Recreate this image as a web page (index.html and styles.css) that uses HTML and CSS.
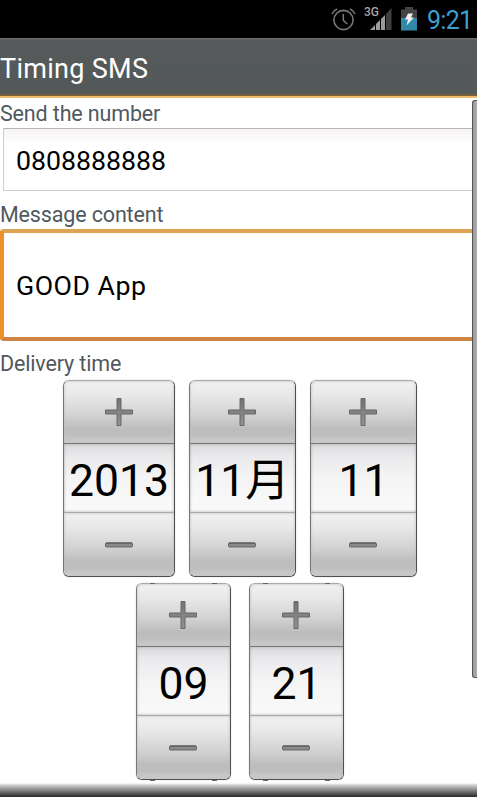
FILE: index.html
```html
<!DOCTYPE html>
<html lang="en">
<head>
  <meta charset="UTF-8" />
  <title>Timing SMS</title>
  <meta name="viewport" content="width=device-width, initial-scale=1" />
  <link rel="stylesheet" href="styles.css">
</head>
<body>
  <svg class="defs" width="0" height="0">
    <defs>
      <linearGradient id="metal" x1="0" y1="0" x2="0" y2="1">
        <stop offset="0" stop-color="#747474" />
        <stop offset="1" stop-color="#929292" />
      </linearGradient>
      <symbol id="plus" viewBox="0 0 28 28">
        <path d="M12 .5h4v11.500h11.500v4H16v11.500h-4V16H.5v-4H12z" fill="url(#metal)" stroke="#666" stroke-linejoin="round" />
      </symbol>
      <symbol id="minus" viewBox="0 0 28 28">
        <rect x=".5" y="12" width="27" height="4" rx="1" fill="#8b8b8b" stroke="#666" />
        <path d="M1 12h26" stroke="#505050" />
      </symbol>
    </defs>
  </svg>

  <div class="status-bar">
    <svg class="alarm" width="26" height="24" viewBox="0 0 26 24" fill="none" stroke="#777">
      <circle cx="12.500" cy="13" r="9.600" stroke-width="1.600" />
      <path d="M12.300 7v6.300l4 3.700" stroke-width="1.500" />
      <path d="M1 7Q2.500 3.500 6 2M19 2Q22.500 3.500 24 7" stroke-width="1.600" />
    </svg>
    <div class="network">
      <span class="network-type">3G</span>
      <svg class="signal" width="22" height="23" viewBox="0 0 22 23">
        <path d="M0 23l5-5v5zM6 17l4-4v10H6zM11 12l4-4v15h-4z" fill="#9b9b9b" />
        <path d="M16 7l5.500-6v22H16z" fill="#3f3f3f" />
      </svg>
    </div>
    <svg class="battery" width="16" height="24" viewBox="0 0 16 24">
      <path d="M4 0h8v2.500h4V12H0V2.500h4z" fill="#444" />
      <path d="M0 11h16v12.500H0z" fill="#3188a8" />
      <path d="M7 6.500h5l-2 4h3L5.500 18.500l1.500-6H4z" fill="#eee" />
    </svg>
    <span class="clock">9:21</span>
  </div>

  <div class="title-bar"><h1>Timing SMS</h1></div>

  <div class="content">
    <label class="label" for="number">Send the number</label>
    <input class="field" id="number" type="text" value="0808888888">

    <label class="label" for="message">Message content</label>
    <input class="field field-active" id="message" type="text" value="GOOD App">

    <div class="label">Delivery time</div>
    <div class="pickers date">
      <div class="picker picker-year">
        <button class="step"><svg><use href="#plus" /></svg></button>
        <div class="value">2013</div>
        <button class="step"><svg><use href="#minus" /></svg></button>
      </div>
      <div class="picker">
        <button class="step"><svg><use href="#plus" /></svg></button>
        <div class="value">11月</div>
        <button class="step"><svg><use href="#minus" /></svg></button>
      </div>
      <div class="picker">
        <button class="step"><svg><use href="#plus" /></svg></button>
        <div class="value">11</div>
        <button class="step"><svg><use href="#minus" /></svg></button>
      </div>
    </div>
    <div class="pickers time">
      <div class="picker picker-time">
        <button class="step"><svg><use href="#plus" /></svg></button>
        <div class="value">09</div>
        <button class="step"><svg><use href="#minus" /></svg></button>
      </div>
      <div class="picker picker-time">
        <button class="step"><svg><use href="#plus" /></svg></button>
        <div class="value">21</div>
        <button class="step"><svg><use href="#minus" /></svg></button>
      </div>
    </div>
    <div class="scrollbar"></div>
  </div>
  <div class="bottom-shade"></div>
</body>
</html>
```
FILE: styles.css
```css
* {
  box-sizing: border-box;
}
body {
  margin: 0;
  height: 797px;
  display: flex;
  flex-direction: column;
  overflow: hidden;
  background: #fff;
  font-family: Roboto, "Noto Sans CJK JP", sans-serif;
  color: #000;
}
.defs {
  position: absolute;
}

/* status bar */
.status-bar {
  height: 38px;
  flex: none;
  display: flex;
  justify-content: flex-end;
  align-items: flex-start;
  padding: 7px 7px 0 0;
  background: #000;
}
.alarm {
  margin-right: 7px;
}
.network {
  width: 28px;
  display: flex;
  justify-content: flex-end;
  position: relative;
  margin-right: 9px;
}
.network-type {
  position: absolute;
  left: 0;
  top: -1px;
  font-size: 12px;
  line-height: 13px;
  font-weight: 500;
  color: #a5a5a5;
}
.battery {
  margin-right: 10px;
}
.clock {
  width: 47px;
  margin-right: -4px;
  font-size: 25px;
  line-height: 27px;
  letter-spacing: -0.7px;
  color: #3f9fce;
}

/* title */
.title-bar {
  height: 60px;
  flex: none;
  background: linear-gradient(#707373 0, #565a5b 2px, #535859 100%);
  border-bottom: 2px solid #edbd69;
  box-shadow: inset 0 -2px #79603b;
}
h1 {
  margin: 0;
  font-size: 27px;
  line-height: 62px;
  font-weight: 400;
  letter-spacing: 0.3px;
  color: #fff;
}

/* form */
.content {
  flex: 1;
  position: relative;
  padding-top: 2px;
}
.label {
  display: block;
  height: 28px;
  font-size: 21.500px;
  line-height: 28px;
  letter-spacing: -0.15px;
  color: #50595e;
}
.field {
  display: block;
  width: 480px;
  height: 63px;
  margin: 0 0 10px 3px;
  padding: 2px 12px 0;
  border: 1px solid #cfcfcf;
  border-top-color: #b5b5b5;
  border-radius: 0;
  outline: none;
  background: linear-gradient(#f5f2f4, #fff 14px);
  font: inherit;
  font-size: 26.700px;
  color: #000;
}
.field-active {
  width: 490px;
  height: 112px;
  margin: 0 0 9px;
  border: 4px solid #cc8440;
  border-top-color: #dda352;
  border-left-color: #ed9028;
  border-radius: 4px;
  background: #fff;
  letter-spacing: 0.5px;
}

/* number pickers */
.pickers {
  display: flex;
  justify-content: center;
}
.date {
  gap: 14px;
  margin-top: 2px;
  padding-left: 3px;
}
.time {
  gap: 18px;
  margin-top: 6px;
  padding-left: 3px;
}
.picker {
  width: 107px;
  height: 197px;
  border: 1px solid #505050;
  border-top-color: #aaa;
  border-left-color: #777;
  border-radius: 6px;
  overflow: hidden;
  box-shadow: 0 0 2px #ddd;
}
.picker-year {
  width: 112px;
}
.picker-time {
  width: 95px;
  position: relative;
  overflow: visible;
}
/* dark notches on the top and bottom edges */
.picker-time::before,
.picker-time::after {
  content: '';
  position: absolute;
  left: 13px;
  right: 13px;
  height: 1px;
  border: solid #666;
  border-width: 0 5px;
}
.picker-time::before {
  top: -1px;
}
.picker-time::after {
  bottom: -2px;
}
.step {
  display: flex;
  width: 100%;
  height: 63px;
  justify-content: center;
  align-items: center;
  padding: 0;
  border: 0;
  background: linear-gradient(#f3f2f3 0, #e8e7e8 25%, #d3d2d3 55%, #bdbcbd 78%, #bfbebf 87%, #cecdce 100%);
  box-shadow: inset 0 0 3px #bbb;
}
.step:first-child {
  height: 62px;
  border-radius: 5px 5px 0 0;
}
.step:last-child {
  border-radius: 0 0 5px 5px;
}
.step svg {
  width: 28px;
  height: 28px;
  margin-right: 1px;
}
.value {
  height: 70px;
  border-top: 1px solid #777;
  border-bottom: 1px solid #aaa;
  background: linear-gradient(#d9d8da 0, #eae9eb 18%, #f5f4f5 50%, #fafafa 100%);
  box-shadow: inset 0 0 3px #aaa;
  font-size: 44.500px;
  line-height: 74px;
  text-align: center;
  white-space: nowrap;
}

.scrollbar {
  position: absolute;
  top: 2px;
  right: 0;
  width: 5px;
  height: 578px;
  border: 1px solid #555;
  border-right: 0;
  border-radius: 3px 0 0 3px;
  background: linear-gradient(to right, #999, #b0b0b0);
}
.bottom-shade {
  height: 14px;
  flex: none;
  background: linear-gradient(#fff 0, #d0d0d0 2px, #888 7px, #333 13px);
}
```
